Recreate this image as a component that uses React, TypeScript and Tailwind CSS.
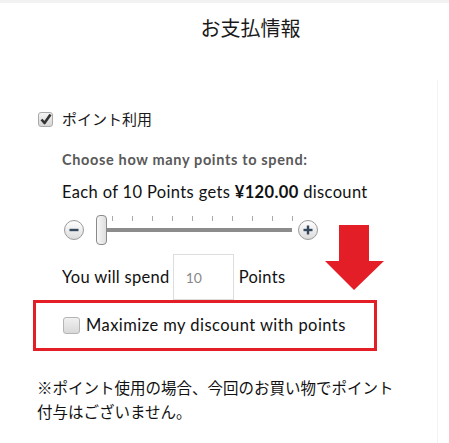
import React from "react"

const jp = { fontFamily: '"Noto Sans CJK JP", "Noto Sans", sans-serif' }
const latin = { fontFamily: 'Lato, "Noto Sans CJK JP", sans-serif' }

function CheckBox({ checked }: { checked: boolean }) {
  return (
    <div className="w-[15px] h-[15px] rounded-[3px] border border-[#a9a9a9] bg-gradient-to-b from-[#f4f4f4] to-[#d6d6d6] flex items-center justify-center shrink-0">
      {checked && (
        <svg width="12" height="12" viewBox="0 0 12 12">
          <path d="M1.5 6.5 L4.5 10 L10.5 1.5" fill="none" stroke="#333" strokeWidth="2.6" strokeLinejoin="round" />
        </svg>
      )}
    </div>
  )
}

function RoundButton({ plus }: { plus?: boolean }) {
  return (
    <div className="w-[20px] h-[20px] rounded-full border border-[#9a9a9a] bg-gradient-to-b from-white to-[#dcdcdc] flex items-center justify-center shrink-0">
      <svg width="12" height="12" viewBox="0 0 12 12">
        <path d="M1.5 6 H10.5" stroke="#34495e" strokeWidth="2.4" />
        {plus && <path d="M6 1.5 V10.5" stroke="#34495e" strokeWidth="2.4" />}
      </svg>
    </div>
  )
}

export default function App() {
  const ticks = [0, 1, 2, 3, 4, 5, 6, 7, 8, 9]

  return (
    <div className="w-[449px] h-[443px] bg-white border-t-[3px] border-[#f2f2f2] relative overflow-hidden text-[#1a1a1a]">
      {/* Title */}
      <div className="pt-[11px] pl-[52px] text-center text-[20px] leading-[28px]" style={jp}>
        お支払情報
      </div>

      {/* Panel */}
      <div className="mt-[38px] w-[438px] h-[400px] border-r border-[#f3f3f3] pt-[27px]">
        <div className="h-[24px] pl-[38px] flex items-center gap-[9px]">
          <CheckBox checked />
          <span className="text-[15px]" style={jp}>ポイント利用</span>
        </div>

        <div className="pl-[62px]" style={latin}>
          <div className="mt-[19px] h-[20px] flex items-center text-[14.5px] tracking-[0.65px] font-bold text-[#595959]">
            Choose how many points to spend:
          </div>
          <div className="mt-[10px] h-[24px] flex items-center text-[16.5px] tracking-[0.35px] text-[#111]">
            Each of 10 Points gets&nbsp;<span className="font-bold">¥120.00</span>&nbsp;discount
          </div>

          {/* Slider */}
          <div className="mt-[10px] h-[32px] flex items-center pl-[2px]">
            <RoundButton />
            <div className="relative w-[214px] h-[32px]">
              <div className="absolute left-[12px] right-[6px] top-[14px] h-[4px] bg-[#8c8c8c]" />
              <div className="absolute left-[28px] top-[2px] flex gap-[19px]">
                {ticks.map((t) => (
                  <div key={t} className="w-[1px] h-[5px] bg-[#aaa] shrink-0" />
                ))}
              </div>
              <div className="absolute left-[12px] top-[1px] w-[11px] h-[30px] rounded-[4px] border border-[#8a8a8a] bg-gradient-to-r from-[#f7f7f7] to-[#dedede]" />
            </div>
            <RoundButton plus />
          </div>

          {/* Spend row */}
          <div className="mt-[8px] h-[46px] flex items-center text-[16.5px] tracking-[0.3px] text-[#111]">
            <span>You will spend</span>
            <div className="ml-[3px] w-[61px] h-[46px] border border-[#dddddd] flex items-center pl-[12px] text-[14px] tracking-normal text-[#888]">
              10
            </div>
            <span className="ml-[5px]">Points</span>
          </div>
        </div>

        {/* Highlighted box */}
        <div className="ml-[33px] w-[344px] h-[51px] border-[3px] border-[#e31e26] flex items-center pl-[27px] gap-[6px]" style={latin}>
          <div className="w-[17px] h-[17px] rounded-[3px] border border-[#b5b5b5] bg-gradient-to-b from-[#f0f0f0] to-[#d9d9d9] shrink-0" />
          <span className="text-[16.5px] tracking-[0.45px] text-[#111]">Maximize my discount with points</span>
        </div>

        <div className="mt-[24px] pl-[37px] pr-[30px] text-[15.5px] leading-[24px] text-[#111]" style={jp}>
          ※ポイント使用の場合、今回のお買い物でポイント付与はございません。
        </div>
      </div>

      {/* Red arrow annotation */}
      <svg className="absolute left-[325px] top-[222px]" width="60" height="66" viewBox="0 0 60 66">
        <polygon points="14,0 44,0 44,36 59,36 29,65 0,36 14,36" fill="#e31e26" />
      </svg>
    </div>
  )
}
